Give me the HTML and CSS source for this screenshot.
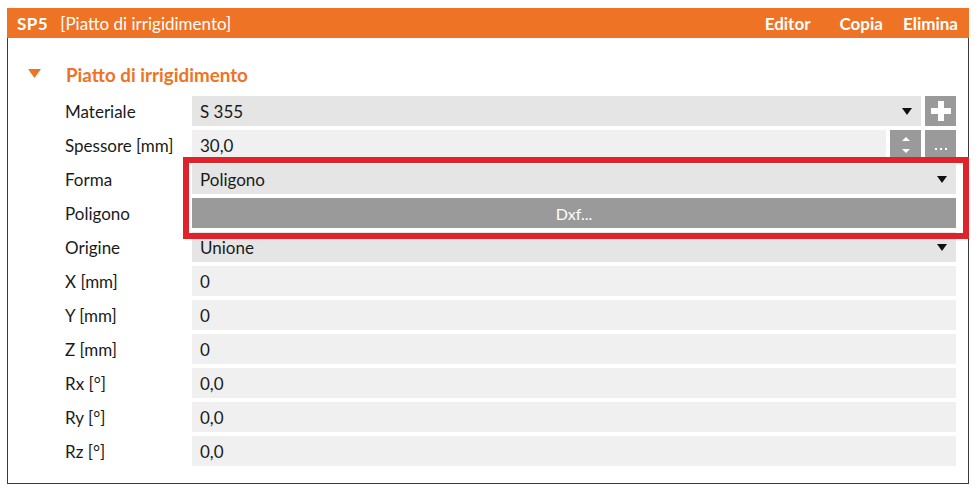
FILE: index.html
```html
<!DOCTYPE html>
<html>
<head>
<meta charset="utf-8">
<link rel="stylesheet" href="styles.css">
</head>
<body>
<div class="frame">
  <div class="header">
    <span class="hd-id">SP5</span>
    <span class="hd-name">[Piatto di irrigidimento]</span>
    <span class="hd-spacer"></span>
    <span class="hd-act act-editor">Editor</span>
    <span class="hd-act act-copia">Copia</span>
    <span class="hd-act act-elimina">Elimina</span>
  </div>
  <div class="section">
    <div class="sec-title">
      <svg class="caret" width="13" height="9" viewBox="0 0 13 9"><path d="M0 0H13L6.5 9Z" fill="#ef7325"/></svg>
      <span>Piatto di irrigidimento</span>
    </div>
    <div class="rows">
      <div class="row">
        <div class="label">Materiale</div>
        <div class="cell">
          <div class="field combo"><span>S 355</span><i class="arrow"></i></div>
          <div class="btn plus"><svg width="22" height="22" viewBox="0 0 22 22"><path d="M8 1H14V8H21V14H14V21H8V14H1V8H8Z" fill="#fff"/></svg></div>
        </div>
      </div>
      <div class="row">
        <div class="label">Spessore [mm]</div>
        <div class="cell">
          <div class="field text"><span>30,0</span></div>
          <div class="btn spin"><svg width="10" height="22" viewBox="0 0 10 22"><path d="M1 7L5 3L9 7Z M1 15L5 19L9 15Z" fill="#fff"/></svg></div>
          <div class="btn dots"><svg width="14" height="4" viewBox="0 0 14 4"><rect x="1" y="1" width="2" height="2" fill="#fff"/><rect x="6" y="1" width="2" height="2" fill="#fff"/><rect x="11" y="1" width="2" height="2" fill="#fff"/></svg></div>
        </div>
      </div>
      <div class="row">
        <div class="label">Forma</div>
        <div class="cell"><div class="field combo"><span>Poligono</span><i class="arrow"></i></div></div>
      </div>
      <div class="row">
        <div class="label">Poligono</div>
        <div class="cell"><div class="field dxf">Dxf...</div></div>
      </div>
      <div class="row">
        <div class="label">Origine</div>
        <div class="cell"><div class="field combo"><span>Unione</span><i class="arrow"></i></div></div>
      </div>
      <div class="row">
        <div class="label">X [mm]</div>
        <div class="cell"><div class="field text"><span>0</span></div></div>
      </div>
      <div class="row">
        <div class="label">Y [mm]</div>
        <div class="cell"><div class="field text"><span>0</span></div></div>
      </div>
      <div class="row">
        <div class="label">Z [mm]</div>
        <div class="cell"><div class="field text"><span>0</span></div></div>
      </div>
      <div class="row">
        <div class="label">Rx [°]</div>
        <div class="cell"><div class="field text"><span>0,0</span></div></div>
      </div>
      <div class="row">
        <div class="label">Ry [°]</div>
        <div class="cell"><div class="field text"><span>0,0</span></div></div>
      </div>
      <div class="row">
        <div class="label">Rz [°]</div>
        <div class="cell"><div class="field text"><span>0,0</span></div></div>
      </div>
    </div>
  </div>
  <div class="highlight"></div>
</div>
</body>
</html>
```
FILE: styles.css
```css
* { box-sizing: border-box; }
html, body { margin: 0; padding: 0; background: #fff; }
body {
  font-family: Lato, "Open Sans", "Liberation Sans", sans-serif;
  color: #1a1a1a;
}
.frame {
  position: relative;
  margin: 8px 0 0 7px;
  width: 962px;
  height: 476px;
  border: 1px solid #3a3a3a;
  border-top: none;
}
.header {
  display: flex;
  align-items: center;
  height: 30px;
  margin: 0 -1px;
  background: #ef7325;
  color: #fff;
  font-size: 17px;
  padding: 0 11px 0 10px;
}
.hd-id { font-weight: 700; margin-right: 12px; letter-spacing: 0.5px; }
.hd-name { font-weight: 400; }
.hd-spacer { flex: 1; }
.hd-act { font-weight: 700; }
.act-copia { margin-left: 29px; }
.act-elimina { margin-left: 20px; }
.section { padding: 0 12px 0 57px; }
.sec-title {
  position: relative;
  display: flex;
  align-items: center;
  height: 58px;
  padding-left: 1px;
  color: #ef7325;
  font-weight: 700;
  font-size: 18.8px;
}
.caret { position: absolute; left: -37px; top: 31px; }
.sec-title span { margin-top: 15px; }
.rows { display: flex; flex-direction: column; gap: 4px; }
.row { display: flex; height: 30px; align-items: center; }
.label { width: 127px; font-size: 17px; }
.cell { flex: 1; display: flex; gap: 4px; height: 30px; }
.field {
  flex: 1;
  display: flex;
  align-items: center;
  padding: 0 8px;
  font-size: 17px;
}
.combo { background: #e5e5e5; justify-content: space-between; }
.text { background: #f0f0f0; }
.dxf { background: #9a9a9a; color: #fff; justify-content: center; font-size: 16px; }
.arrow {
  width: 0; height: 0;
  border-left: 5px solid transparent;
  border-right: 5px solid transparent;
  border-top: 7px solid #111;
  margin-right: 1px;
}
.btn {
  width: 31px;
  display: flex;
  align-items: center;
  justify-content: center;
  background: #9a9a9a;
  color: #fff;
}
.dots { align-items: flex-end; padding-bottom: 9px; }
.highlight {
  position: absolute;
  left: 175px;
  top: 149px;
  width: 786px;
  height: 82px;
  border: 6px solid #e0222b;
}
```
